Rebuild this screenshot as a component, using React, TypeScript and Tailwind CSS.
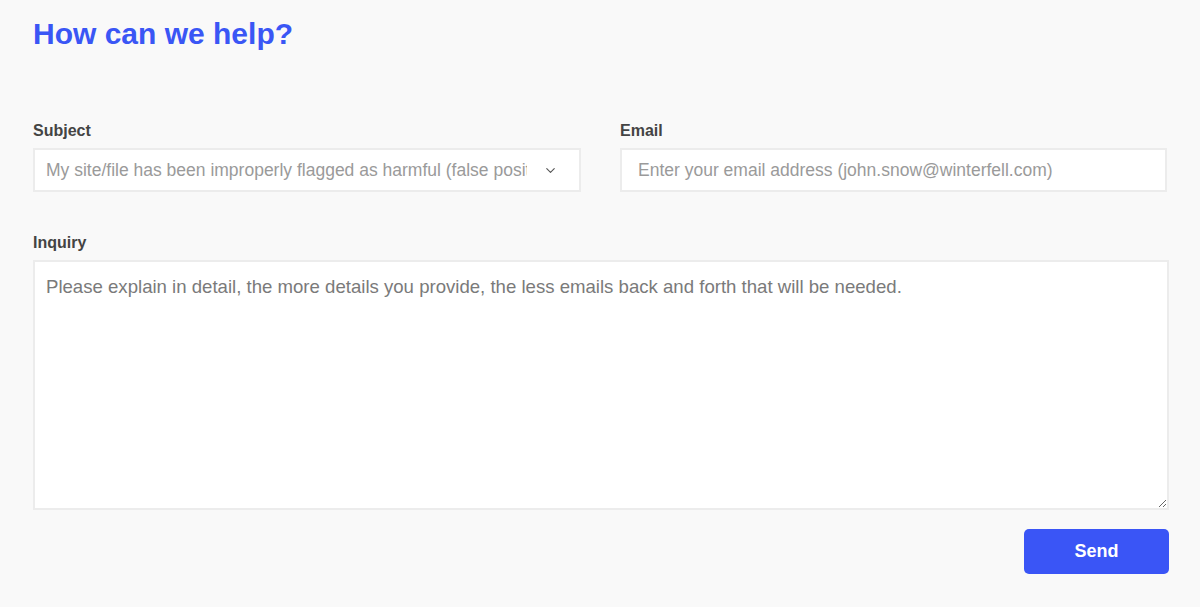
import React from 'react';
import { ChevronDown } from 'lucide-react';

const font = { fontFamily: '"Liberation Sans", Arial, sans-serif' };

const Label: React.FC<{ children: React.ReactNode }> = ({ children }) => (
  <label className="block text-[16px] font-bold text-[#444444] mb-[7px] leading-[20px]">{children}</label>
);

const App: React.FC = () => {
  return (
    <div className="min-h-[607px] bg-[#f9f9f9] pl-[33px] pr-[31px] pt-[16px]" style={font}>
      <h1 className="text-[30px] font-bold text-[#3a56f5] leading-[36px]">How can we help?</h1>

      <form className="mt-[69px]" onSubmit={(e) => e.preventDefault()}>
        <div className="grid grid-cols-[548px_1fr] gap-[39px] pr-[2px]">
          <div>
            <Label>Subject</Label>
            <div className="h-[44px] bg-white border-2 border-[#ececec] flex items-center">
              <div className="flex-1 overflow-hidden whitespace-nowrap pl-[11px] text-[17.5px] text-[#9a9a9a]">
                My site/file has been improperly flagged as harmful (false positive)
              </div>
              <div className="w-[52px] flex justify-center pr-[6px]">
                <ChevronDown className="w-[15px] h-[15px] text-[#555]" strokeWidth={1.8} />
              </div>
            </div>
          </div>
          <div>
            <Label>Email</Label>
            <input
              type="email"
              placeholder="Enter your email address (john.snow@winterfell.com)"
              className="w-full h-[44px] bg-white border-2 border-[#ececec] px-[16px] text-[17.5px] text-[#555] placeholder:text-[#9a9a9a] outline-none"
            />
          </div>
        </div>

        <div className="mt-[41px]">
          <Label>Inquiry</Label>
          <textarea
            placeholder="Please explain in detail, the more details you provide, the less emails back and forth that will be needed."
            className="block w-full h-[250px] bg-white border-2 border-[#ececec] px-[11px] pt-[13px] text-[18.6px] leading-[24px] text-[#555] placeholder:text-[#7a7a7a] outline-none resize"
          />
        </div>

        <div className="flex justify-end mt-[19px]">
          <button
            type="submit"
            className="w-[145px] h-[45px] rounded-[5px] bg-[#3a55f6] text-white text-[18px] font-bold"
          >
            Send
          </button>
        </div>
      </form>
    </div>
  );
};

export default App;
